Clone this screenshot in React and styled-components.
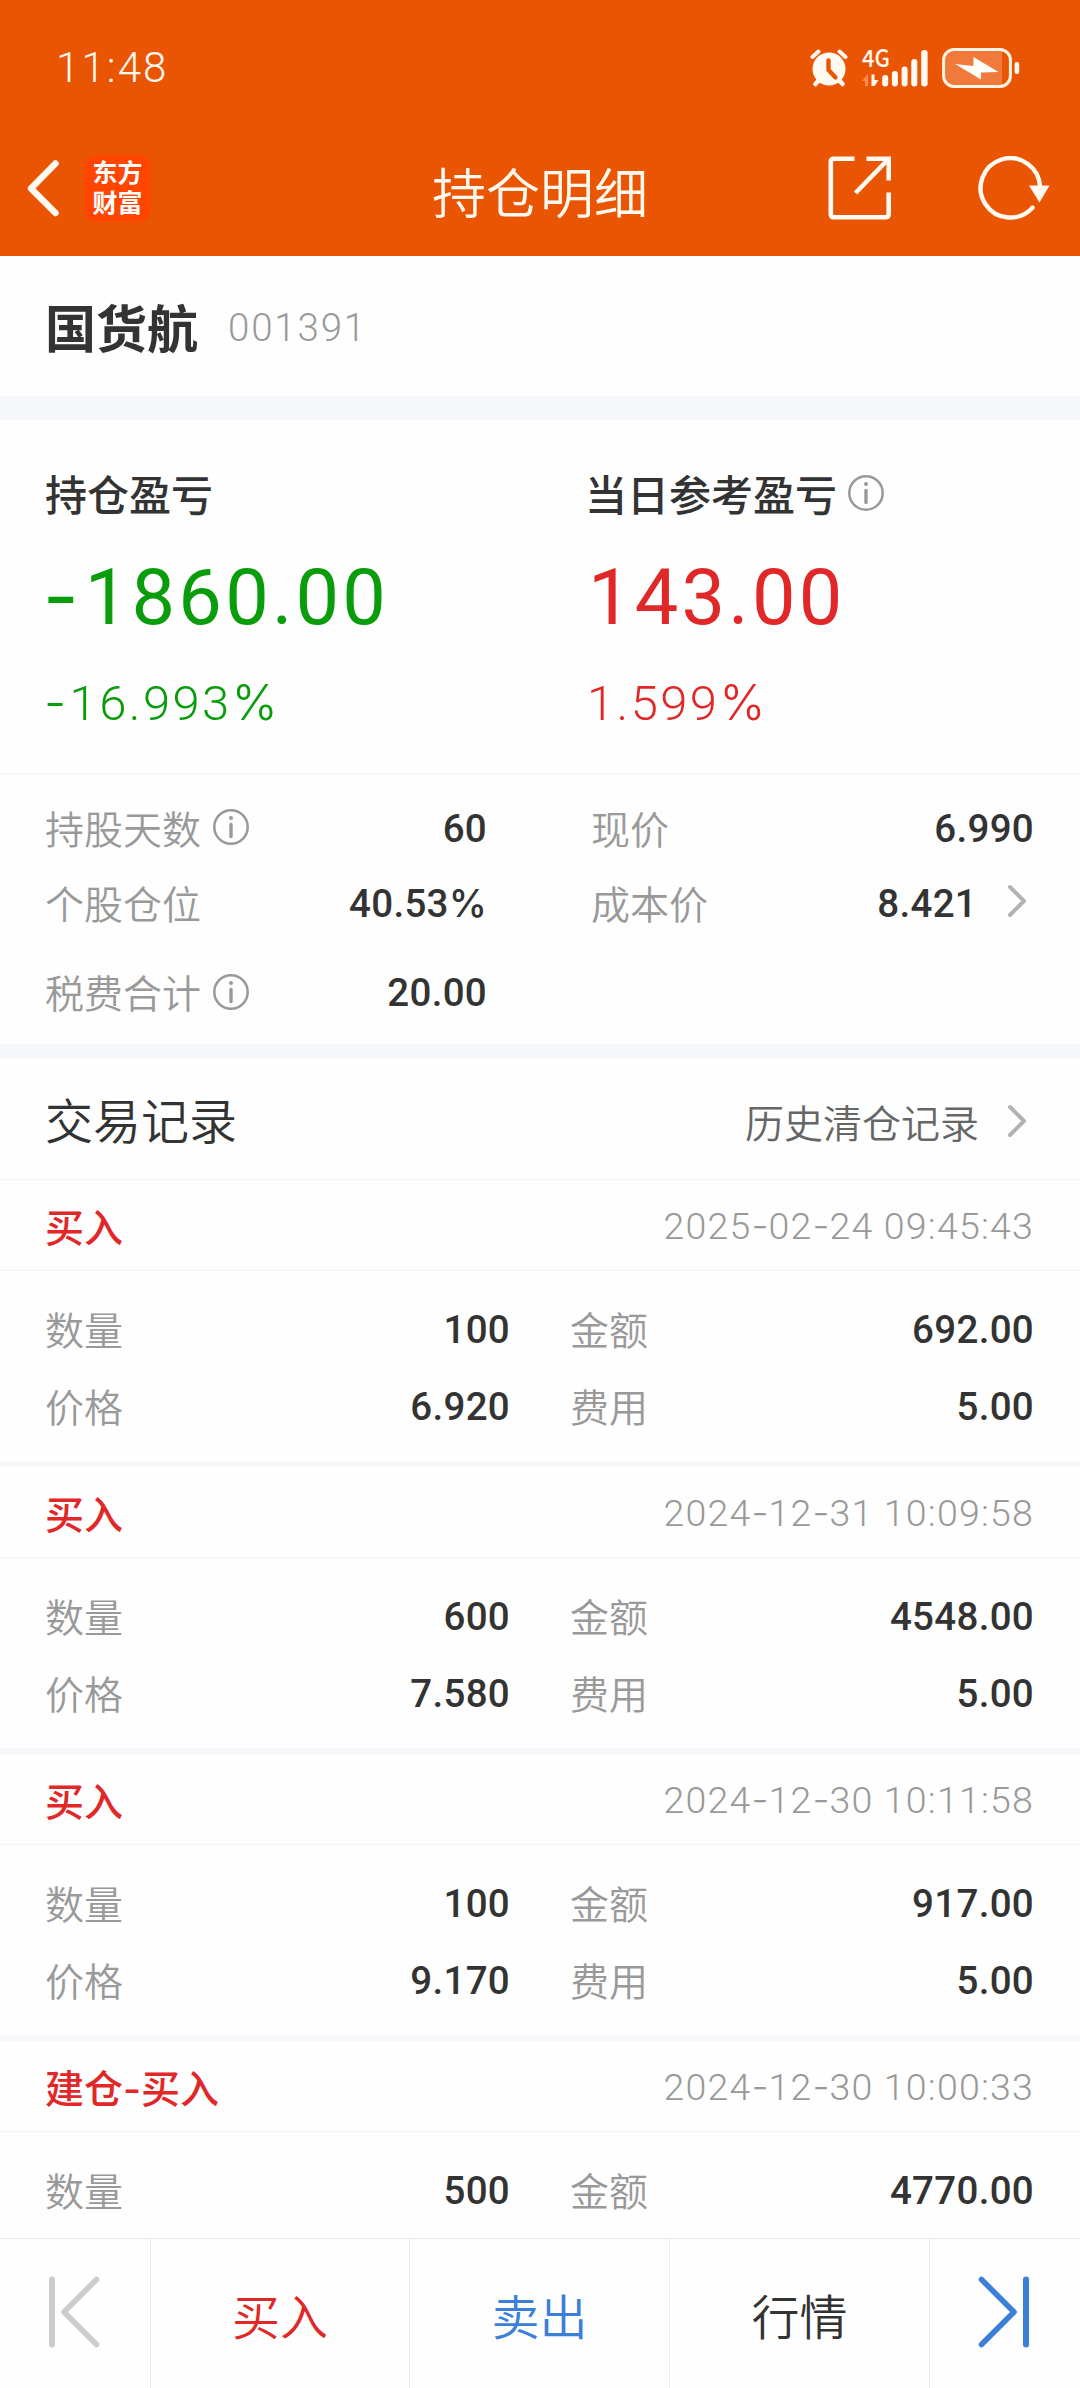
import React from "react";
import styled, { createGlobalStyle } from "styled-components";

const color = {
  brand: "#ea5504",
  ink: "#333333",
  mid: "#666666",
  soft: "#999999",
  up: "#e02828",
  down: "#099c0b",
  blue: "#3b7fd9",
  band: "#f6f7fa",
  hair: "#f5f5f6",
};

const digits = `Roboto, "Noto Sans CJK SC", sans-serif`;

const GlobalStyle = createGlobalStyle`
  * { box-sizing: border-box; }
  body {
    margin: 0;
    background: #fff;
    font-family: Inter, "Noto Sans CJK SC", sans-serif;
    line-height: 1.25;
  }
  svg { display: block; flex: none; }
`;

const Screen = styled.div`
  width: 1080px;
  height: 2388px;
  display: flex;
  flex-direction: column;
  overflow: hidden;
  background: #fefefe;
  color: ${color.ink};
`;

const Header = styled.header`
  flex: none;
  height: 256px;
  background: ${color.brand};
  color: #fff8ee;
`;

const StatusBar = styled.div`
  height: 120px;
  padding: 15px 60px 0 56px;
  display: flex;
  align-items: center;
  justify-content: space-between;
`;

const Clock = styled.span`
  font-family: ${digits};
  font-size: 42px;
  font-weight: 350;
  line-height: 50px;
  letter-spacing: 2.1px;
  padding-top: 1px;
`;

const StatusIcons = styled.div`
  display: flex;
  align-items: center;
`;

const Network = styled.div`
  position: relative;
  width: 66px;
  height: 40px;
  margin: 0 14px 0 14px;
`;

const NetworkType = styled.span`
  position: absolute;
  left: 0;
  top: -3px;
  font: 500 24px/24px "Noto Sans CJK SC", sans-serif;
  transform: scaleX(0.92);
  transform-origin: left;
`;

const NavBar = styled.div`
  height: 136px;
  display: grid;
  grid-template-columns: 300px 1fr 300px;
  align-items: center;
`;

const NavLeft = styled.div`
  display: flex;
  align-items: center;
  gap: 24px;
  padding-left: 26px;
`;

const NavRight = styled.div`
  display: flex;
  align-items: center;
  justify-content: flex-end;
  gap: 86px;
  padding-right: 29px;
`;

const NavTitle = styled.h1`
  margin: 0;
  padding-top: 13px;
  text-align: center;
  font-size: 54px;
  line-height: 66px;
  font-weight: 350;
`;

const AppLogo = styled.div`
  width: 67px;
  height: 67px;
  border-radius: 13px;
  background: #ff4500;
  color: #fff;
  text-align: center;
  padding-top: 3px;
  font-size: 25px;
  line-height: 30px;
  font-weight: 700;
`;

const Main = styled.main`
  flex: 1;
  min-height: 0;
  overflow: hidden;
`;

const StockBar = styled.section`
  height: 140px;
  padding: 4px 45px 0;
  display: flex;
  align-items: center;
  gap: 30px;
`;

const StockName = styled.span`
  font-size: 51px;
  line-height: 60px;
  font-weight: 600;
  padding-top: 4px;
`;

const StockCode = styled.span`
  font-family: ${digits};
  font-size: 38.5px;
  font-weight: 350;
  color: ${color.soft};
  letter-spacing: 1.8px;
`;

const Band = styled.div`
  height: ${(p) => p.$size}px;
  background: ${color.band};
`;

const Summary = styled.section`
  height: 354px;
  display: grid;
  grid-template-columns: 540px 1fr;
  padding-left: 45px;
  border-bottom: 1px solid ${color.hair};
`;

const ProfitTitle = styled.div`
  display: flex;
  align-items: center;
  gap: 11px;
  height: 50px;
  margin-top: 51px;
  font-size: 42px;
  font-weight: 500;
`;

const Amount = styled.div`
  margin-top: 41px;
  font-family: ${digits};
  font-size: 77.5px;
  line-height: 72px;
  font-weight: 400;
  letter-spacing: 3.2px;
  text-indent: ${(p) => p.$indent || 0}px;
  color: ${(p) => p.$color};
`;

const Percent = styled.div`
  margin-top: 36px;
  font-family: ${digits};
  font-size: 49px;
  line-height: 68px;
  font-weight: 350;
  letter-spacing: 2.4px;
  text-indent: ${(p) => p.$indent || 0}px;
  color: ${(p) => p.$color};
`;

const Symbol = styled.span`
  font-family: Inter, sans-serif;
  line-height: 0;
  letter-spacing: ${(p) => p.$spacing};
`;

const Details = styled.section`
  height: 270px;
  padding: 16px 46px 0 45px;
  display: grid;
  grid-template-columns: 442px 443px;
  grid-template-rows: 75px 75px 104px;
  justify-content: space-between;
`;

const Pair = styled.div`
  display: flex;
  align-items: center;
  justify-content: space-between;
`;

const Label = styled.span`
  display: flex;
  align-items: center;
  gap: 12px;
  padding-top: 5px;
  font-size: 39px;
  font-weight: 350;
  color: ${color.soft};
`;

const Value = styled.span`
  display: flex;
  align-items: center;
  font-family: ${digits};
  font-size: 38.5px;
  font-weight: 500;
  letter-spacing: 0.3px;
  color: ${color.ink};
`;

const ValueText = styled.span`
  padding-top: 3px;
`;

const SectionHead = styled.div`
  height: 121px;
  padding: 2px 46px 0 45px;
  display: flex;
  align-items: center;
  justify-content: space-between;
  border-bottom: 1px solid ${color.hair};
`;

const SectionTitle = styled.h2`
  margin: 0;
  padding-top: 3px;
  font-size: 48px;
  font-weight: 350;
`;

const HistoryLink = styled.span`
  display: flex;
  align-items: center;
  font-size: 39px;
  font-weight: 350;
  color: ${color.mid};
`;

const LinkText = styled.span`
  padding-top: 8px;
`;

const Record = styled.article`
  height: 287px;
  border-bottom: 6px solid ${color.band};
`;

const RecordHead = styled.div`
  height: 91px;
  padding: 2px 46px 0 45px;
  display: flex;
  align-items: center;
  justify-content: space-between;
  border-bottom: 1px solid ${color.hair};
`;

const Action = styled.span`
  padding-top: 4px;
  font-size: 39px;
  font-weight: 500;
  color: ${color.up};
`;

const Time = styled.time`
  font-family: ${digits};
  font-size: 37.5px;
  font-weight: 350;
  letter-spacing: 1.2px;
  color: ${color.soft};
`;

const RecordBody = styled.div`
  padding: 19px 46px 17px 45px;
  display: grid;
  grid-template-columns: 465px 464px;
  grid-auto-rows: 77px;
  justify-content: space-between;
`;

const Footer = styled.footer`
  flex: none;
  height: 150px;
  display: grid;
  grid-template-columns: 151px 259px 260px 260px 1fr;
  border-top: 1px solid #e9e9ea;
`;

const FooterItem = styled.div`
  display: flex;
  align-items: center;
  justify-content: center;
  padding: ${(p) => (p.$icon ? "0 2px 4px 0" : "8px 0 0")};
  font-size: 48px;
  font-weight: 350;
  color: ${(p) => p.$color};
  border-right: 1px solid #ececee;
  &:last-child { border-right: 0; }
`;

const ChevronSvg = styled.svg`
  margin: ${(p) => p.$top}px 7px 0 ${(p) => p.$gap}px;
`;

const InfoSvg = styled.svg`
  margin-top: -6px;
`;

const InfoIcon = () => (
  <InfoSvg width="36" height="36" viewBox="0 0 36 36" fill="none" stroke="#999">
    <circle cx="18" cy="18" r="16.7" strokeWidth="2.5" />
    <path d="M18 15.5V27.5" strokeWidth="3.4" strokeLinecap="round" />
    <circle cx="18" cy="9" r="2" fill="#999" stroke="none" />
  </InfoSvg>
);

const Chevron = ({ gap, top }) => (
  <ChevronSvg $gap={gap} $top={top} width="20" height="34" viewBox="0 0 20 34" fill="none" stroke="#b2b2b2" strokeWidth="4" strokeLinecap="round" strokeLinejoin="round">
    <path d="M3 3L17 17L3 31" />
  </ChevronSvg>
);

const AlarmIcon = () => (
  <svg width="38" height="40" viewBox="0 0 38 40" fill="none" strokeLinecap="round">
    <path d="M2.5 9L8.5 3.5M35.5 9L29.5 3.5" stroke="#fff8ee" strokeWidth="4" />
    <path d="M9 32L5.5 36M29 32L32.5 36" stroke="#fff8ee" strokeWidth="4.5" />
    <circle cx="19" cy="21" r="16.5" fill="#fffaf2" />
    <path d="M18.5 12.5V22L25.5 29.5" stroke={color.brand} strokeWidth="4.4" strokeLinejoin="round" />
  </svg>
);

const SignalIcon = () => (
  <svg width="66" height="40" viewBox="0 0 66 40" fill="#fffaf2">
    <path d="M0 33L6 26V38H3V33Z" fill="#ff8a50" />
    <path d="M9.5 26.5V38H12.5L16.5 32H12.5V26.5Z" />
    <rect x="20.2" y="27" width="6" height="11.5" rx="3" />
    <rect x="29.9" y="23" width="6" height="15.5" rx="3" />
    <rect x="39.6" y="18.5" width="6" height="20" rx="3" />
    <rect x="49.3" y="11" width="6" height="27.5" rx="3" />
    <rect x="59.2" y="2" width="6.4" height="36.5" rx="3" />
  </svg>
);

const BatteryIcon = () => (
  <svg width="78" height="40" viewBox="0 0 78 40" fill="none">
    <path d="M13 3H60V37H13Q3 37 3 27V13Q3 3 13 3Z" fill="#f07a3c" />
    <rect x="1.6" y="1.6" width="66.8" height="36.8" rx="10.5" stroke="#fff4e4" strokeWidth="3" />
    <rect x="72.6" y="14" width="4.6" height="12" rx="2.2" fill="#fffaf2" />
    <path d="M13 16L31.5 18V9L56.5 24L39 24.5V31.5Z" fill="#fffdf8" />
  </svg>
);

const BackIcon = () => (
  <svg width="34" height="60" viewBox="0 0 34 60" fill="none" stroke="#fffaf2" strokeWidth="6.5" strokeLinecap="round" strokeLinejoin="round">
    <path d="M29.5 5.5L5 30.5L29.5 55" />
  </svg>
);

const ShareIcon = () => (
  <svg width="64" height="64" viewBox="0 0 64 64" fill="none" stroke="#fffaf2" strokeWidth="4.6">
    <path d="M26.5 2.8H6Q2.8 2.8 2.8 6V58Q2.8 61.2 6 61.2H57.5Q60.7 61.2 60.7 58V36.5" />
    <path d="M38.5 2.8H60.7V24.5" />
    <path d="M60 3.5L27.5 37" />
  </svg>
);

const RefreshIcon = () => (
  <svg width="73" height="64" viewBox="0 0 73 64" fill="none">
    <path d="M62 31A29.7 29.7 0 1 0 54.5 51.6" stroke="#fffaf2" strokeWidth="4.4" strokeLinecap="round" />
    <path d="M51 29.5H71.5L61.5 46.5Z" fill="#fffaf2" />
  </svg>
);

const SkipIcon = ({ stroke, flip }) => (
  <svg width="52" height="72" viewBox="0 0 52 72" fill="none" stroke={stroke} strokeWidth="6" strokeLinecap="round" strokeLinejoin="round">
    <g transform={flip ? "translate(52 0) scale(-1 1)" : undefined}>
      <path d="M4 3.5V68.5" />
      <path d="M48.5 3.5L16 36L48.5 68.5" strokeWidth="5.6" />
    </g>
  </svg>
);

const details = [
  { label: "持股天数", value: "60", info: true },
  { label: "现价", value: "6.990" },
  { label: "个股仓位", value: "40.53%" },
  { label: "成本价", value: "8.421", link: true },
  { label: "税费合计", value: "20.00", info: true },
];

const records = [
  { action: "买入", time: "2025-02-24 09:45:43", qty: "100", total: "692.00", price: "6.920", fee: "5.00" },
  { action: "买入", time: "2024-12-31 10:09:58", qty: "600", total: "4548.00", price: "7.580", fee: "5.00" },
  { action: "买入", time: "2024-12-30 10:11:58", qty: "100", total: "917.00", price: "9.170", fee: "5.00" },
  { action: "建仓-买入", time: "2024-12-30 10:00:33", qty: "500", total: "4770.00" },
];

// Hyphens and percent signs are set in a wider face than the digits.
const Figures = ({ text, dash = "0" }) =>
  text.split(/([-%])/).filter(Boolean).map((part, i) =>
    part === "-" || part === "%" ? (
      <Symbol key={i} $spacing={part === "-" ? dash : "0"}>{part}</Symbol>
    ) : (
      <React.Fragment key={i}>{part}</React.Fragment>
    )
  );

const Field = ({ label, value, info, link }) => (
  <Pair>
    <Label>{label}{info && <InfoIcon />}</Label>
    <Value>
      <ValueText><Figures text={value} /></ValueText>
      {link && <Chevron gap={30} top={-3} />}
    </Value>
  </Pair>
);

export default function App() {
  return (
    <Screen>
      <GlobalStyle />
      <Header>
        <StatusBar>
          <Clock>11:48</Clock>
          <StatusIcons>
            <AlarmIcon />
            <Network>
              <NetworkType>4G</NetworkType>
              <SignalIcon />
            </Network>
            <BatteryIcon />
          </StatusIcons>
        </StatusBar>
        <NavBar>
          <NavLeft>
            <BackIcon />
            <AppLogo>东方<br />财富</AppLogo>
          </NavLeft>
          <NavTitle>持仓明细</NavTitle>
          <NavRight>
            <ShareIcon />
            <RefreshIcon />
          </NavRight>
        </NavBar>
      </Header>
      <Main>
        <StockBar>
          <StockName>国货航</StockName>
          <StockCode>001391</StockCode>
        </StockBar>
        <Band $size={24} />
        <Summary>
          <div>
            <ProfitTitle>持仓盈亏</ProfitTitle>
            <Amount $color={color.down} $indent={-2}><Figures text="-1860.00" dash="0.08em" /></Amount>
            <Percent $color={color.down} $indent={-1}><Figures text="-16.993%" dash="0.07em" /></Percent>
          </div>
          <div>
            <ProfitTitle>当日参考盈亏<InfoIcon /></ProfitTitle>
            <Amount $color={color.up} $indent={3}>143.00</Amount>
            <Percent $color={color.up} $indent={2}><Figures text="1.599%" /></Percent>
          </div>
        </Summary>
        <Details>
          {details.map((d) => <Field key={d.label} {...d} />)}
        </Details>
        <Band $size={15} />
        <SectionHead>
          <SectionTitle>交易记录</SectionTitle>
          <HistoryLink><LinkText>历史清仓记录</LinkText><Chevron gap={28} top={2} /></HistoryLink>
        </SectionHead>
        {records.map((r) => (
          <Record key={r.time}>
            <RecordHead>
              <Action>{r.action}</Action>
              <Time><Figures text={r.time} /></Time>
            </RecordHead>
            <RecordBody>
              <Field label="数量" value={r.qty} />
              <Field label="金额" value={r.total} />
              {r.price && <Field label="价格" value={r.price} />}
              {r.fee && <Field label="费用" value={r.fee} />}
            </RecordBody>
          </Record>
        ))}
      </Main>
      <Footer>
        <FooterItem $icon $color="#ccc"><SkipIcon stroke="#cccccc" /></FooterItem>
        <FooterItem $color={color.up}>买入</FooterItem>
        <FooterItem $color={color.blue}>卖出</FooterItem>
        <FooterItem $color={color.ink}>行情</FooterItem>
        <FooterItem $icon $color={color.blue}><SkipIcon stroke={color.blue} flip /></FooterItem>
      </Footer>
    </Screen>
  );
}
